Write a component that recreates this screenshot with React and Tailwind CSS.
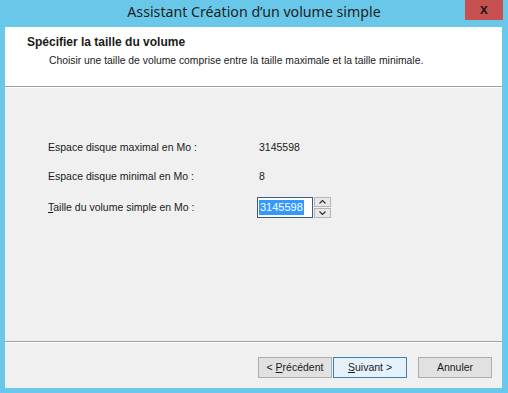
export default function App() {
  const f = { fontFamily: '"Liberation Sans", Arial, sans-serif' };
  return (
    <div className="w-[508px] h-[393px] bg-[#69c8e9] flex flex-col overflow-hidden" style={f}>
      <div className="relative h-[27px] flex items-start justify-center shrink-0">
        <span className="text-[14.2px] leading-[20px] text-[#1e1e1e] pt-[2px]" style={{ fontFamily: '"Noto Sans", "Open Sans", sans-serif' }}>
          Assistant Création d’un volume simple
        </span>
        <div className="absolute left-[465px] top-0 w-[38px] h-[20px] bg-[#c75050] flex items-center justify-center">
          <span className="text-[14px] font-bold text-[#1a1a1a] leading-none pb-[2px]" style={{ fontFamily: '"Liberation Sans", sans-serif' }}>x</span>
        </div>
      </div>
      <div className="mx-[5px] w-[497px] h-[361px] flex flex-col bg-[#f0f0f0] text-[10.5px] text-[#1a1a1a]">
        <div className="h-[59px] bg-white pl-[22px] pt-[9px] shrink-0">
          <div className="font-bold text-[12px] leading-[13px]">Spécifier la taille du volume</div>
          <div className="pl-[22px] pt-[5px] leading-[13px] text-[10.35px]">Choisir une taille de volume comprise entre la taille maximale et la taille minimale.</div>
        </div>
        <div className="h-[1px] bg-[#a0a0a0] shrink-0" />
        <div className="h-[1px] bg-white shrink-0" />
        <div className="h-[253px] shrink-0 pl-[43px] pt-[53px] flex flex-col">
          <div className="flex items-center h-[14px]">
            <span className="w-[211px]">Espace disque maximal en Mo :</span>
            <span>3145598</span>
          </div>
          <div className="flex items-center h-[14px] mt-[15px]">
            <span className="w-[211px]">Espace disque minimal en Mo :</span>
            <span>8</span>
          </div>
          <div className="flex items-center mt-[13px] h-[21px]">
            <span className="w-[209px]"><span className="underline">T</span>aille du volume simple en Mo :</span>
            <div className="flex items-center">
              <div className="w-[56px] h-[21px] bg-white border border-[#3c5a8a] flex items-center pl-[1px]">
                <span className="bg-[#3399ff] text-white leading-[15px] px-[1px] text-[11px]">3145598</span>
              </div>
              <div className="flex flex-col ml-[1px] w-[17px] h-[21px]">
                <div className="h-[10px] border border-[#b5b5b5] bg-[#e8e8e8] flex items-center justify-center">
                  <svg width="7" height="4" viewBox="0 0 7 4"><path d="M0.5 3.5 L3.5 0.5 L6.5 3.5" fill="none" stroke="#333" strokeWidth="1.2" /></svg>
                </div>
                <div className="h-[10px] mt-[1px] border border-[#b5b5b5] bg-[#e8e8e8] flex items-center justify-center">
                  <svg width="7" height="4" viewBox="0 0 7 4"><path d="M0.5 0.5 L3.5 3.5 L6.5 0.5" fill="none" stroke="#333" strokeWidth="1.2" /></svg>
                </div>
              </div>
            </div>
          </div>
        </div>
        <div className="h-[1px] bg-[#a0a0a0] shrink-0" />
        <div className="h-[1px] bg-white shrink-0" />
        <div className="flex-1 flex items-start pt-[14px] pl-[253px]">
          <button className="w-[74px] h-[21px] border border-[#adadad] bg-[#e1e1e1] text-[10.5px] text-[#1a1a1a] flex items-center justify-center">
            &lt;&nbsp;<span className="underline">P</span>récédent
          </button>
          <button className="ml-[1px] w-[74px] h-[21px] border border-[#3c7fb1] bg-[#e5f1fb] text-[10.5px] text-[#1a1a1a] flex items-center justify-center">
            <span className="underline">S</span>uivant &gt;
          </button>
          <button className="ml-[11px] w-[74px] h-[21px] border border-[#adadad] bg-[#e1e1e1] text-[10.5px] text-[#1a1a1a] flex items-center justify-center">
            Annuler
          </button>
        </div>
      </div>
    </div>
  );
}
